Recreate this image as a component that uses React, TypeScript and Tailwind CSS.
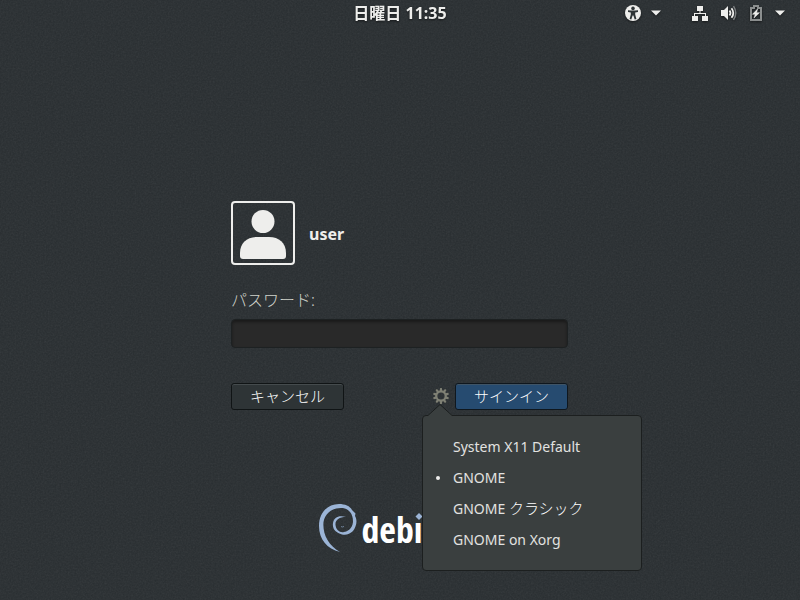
import React from "react";

const sessions = [
  { name: "System X11 Default", kana: "", active: false },
  { name: "GNOME", kana: "", active: true },
  { name: "GNOME ", kana: "クラシック", active: false },
  { name: "GNOME on Xorg", kana: "", active: false },
];

function Grain() {
  return (
    <svg aria-hidden="true" className="pointer-events-none absolute inset-0 h-full w-full opacity-[0.09]">
      <filter id="grain">
        <feTurbulence type="fractalNoise" baseFrequency="0.6" numOctaves="2" />
        <feColorMatrix type="saturate" values="0" />
      </filter>
      <rect width="100%" height="100%" filter="url(#grain)" />
    </svg>
  );
}

function Caret() {
  return (
    <svg width="10" height="6" viewBox="0 0 10 6" fill="#eeeeec" aria-hidden="true">
      <path d="M0 0.5h10L5 5.5z" />
    </svg>
  );
}

function AccessibilityIcon() {
  return (
    <svg width="16" height="16" viewBox="0 0 16 16" aria-hidden="true">
      <circle cx="8" cy="8" r="8" fill="#eeeeec" />
      <circle cx="8" cy="3.4" r="1.8" fill="#2e3436" />
      <path
        d="M3 5.2l3.2.4h3.6l3.2-.4v1.700l-2.800.5v2.200l1.200 4.400-1.700.5L8.400 10.600h-.8L6.300 14.500l-1.700-.5L5.800 9.600V7.400L3 6.900z"
        fill="#2e3436"
      />
    </svg>
  );
}

function NetworkIcon() {
  return (
    <svg width="16" height="16" viewBox="0 0 16 16" fill="#eeeeec" aria-hidden="true">
      <path d="M5 1h6v5H8.500v2H14v3h2v5h-6v-5h3V9H3v2h3v5H0v-5h2V8h5.500V6H5z" />
    </svg>
  );
}

function VolumeIcon() {
  return (
    <svg width="16" height="16" viewBox="0 0 16 16" fill="none" aria-hidden="true">
      <path d="M0 5h3l4-4v14l-4-4H0z" fill="#eeeeec" />
      <path d="M8.500 5.500q2 2.500 0 5M10.500 3.200q3.600 4.800 0 9.600" stroke="#eeeeec" strokeWidth="1.800" />
      <path d="M12.500 1.200q4.500 6.800 0 13.600" stroke="#7b7f80" strokeWidth="1.500" />
    </svg>
  );
}

function BatteryIcon() {
  return (
    <svg width="12" height="16" viewBox="0 0 12 16" aria-hidden="true">
      <path d="M4 1h4v2h3v12H1V3h3z" fill="none" stroke="#8b8e8e" strokeWidth="2" />
      <path d="M7.500 4L2.500 9.300h2.700L4 13l5.500-5.300H6.700z" fill="#eeeeec" stroke="#eeeeec" strokeWidth="0.500" />
    </svg>
  );
}

function GearIcon() {
  const teeth = [0, 36, 72, 108, 144, 180, 216, 252, 288, 324];
  return (
    <svg width="16" height="16" viewBox="0 0 16 16" aria-hidden="true">
      <circle cx="8" cy="8" r="4.700" fill="none" stroke="#7f8074" strokeWidth="2.200" />
      {teeth.map((angle) => (
        <path key={angle} d="M7.100 0h1.800l.4 3H6.700z" fill="#7f8074" transform={`rotate(${angle} 8 8)`} />
      ))}
    </svg>
  );
}

function TopBar() {
  return (
    <header className="relative grid h-[26px] grid-cols-[1fr_auto_1fr] items-center px-[15px] [filter:drop-shadow(0_1px_1px_#0008)]">
      <div />
      <time className="text-base font-bold">日曜日 11:35</time>
      <div className="flex items-center justify-end gap-[31px]">
        <button type="button" aria-label="アクセシビリティ" className="flex h-[26px] items-center gap-[10px]">
          <AccessibilityIcon />
          <Caret />
        </button>
        <button type="button" aria-label="システム" className="flex h-[26px] items-center gap-[13px]">
          <NetworkIcon />
          <VolumeIcon />
          <BatteryIcon />
          <Caret />
        </button>
      </div>
    </header>
  );
}

function SessionMenu() {
  return (
    <div
      role="menu"
      className="absolute top-8 -left-[11px] z-10 w-[220px] rounded-[4px] border border-[#1c1f1f] bg-[#3a3f3f] py-[15px] text-[#e2e2e0]"
    >
      <svg width="26" height="13" viewBox="0 0 26 13" className="absolute -top-3 left-1" aria-hidden="true">
        <path d="M0.500 13V11.500L13 0.500L25.500 11.500V13z" fill="#3a3f3f" />
        <path d="M0 11.500h1L13 0.500L25 11.500h1" fill="none" stroke="#1c1f1f" />
      </svg>
      {sessions.map((session) => (
        <button
          key={session.name + session.kana}
          type="button"
          role="menuitemradio"
          aria-checked={session.active}
          className="flex h-[31px] w-full items-center text-left text-sm"
        >
          <span className="flex w-[30px] justify-center">
            {session.active && <span className="h-1 w-1 rounded-full bg-[#eeeeec]" />}
          </span>
          <span>
            {session.name}
            {session.kana && <span className="text-[15px] leading-5 font-light text-white">{session.kana}</span>}
          </span>
        </button>
      ))}
    </div>
  );
}

function LoginForm() {
  return (
    <form className="relative z-10 flex w-[337px] flex-col" onSubmit={(event) => event.preventDefault()}>
      <div className="flex items-center gap-[14px]">
        <div className="h-16 w-16 rounded-[4px] border-2 border-[#eeeeec]">
          <svg width="60" height="60" viewBox="0 0 60 60" fill="#eeeeec" aria-hidden="true">
            <circle cx="30" cy="18.500" r="11.500" />
            <path d="M7 53V50C7 40 14 34 24 34H36C46 34 53 40 53 50V53Q53 56 50 56H10Q7 56 7 53z" />
          </svg>
        </div>
        <span className="pt-0.5 text-base font-bold">user</span>
      </div>
      <label htmlFor="password" className="mt-[23px] text-base leading-6 font-light text-[#d0d3cb]">
        パスワード:
      </label>
      <input
        id="password"
        type="password"
        className="mt-[7px] h-[29px] w-full rounded-[4px] border border-[#1d2122] bg-[#292929] px-2 shadow-[inset_0_2px_3px_#1a1a1a] outline-none"
      />
      <div className="mt-[35px] flex items-center">
        <button
          type="button"
          className="h-[27px] w-[113px] rounded-[3px] border border-[#101415] bg-[#2e3436] pb-0.5 text-[15px] leading-5 font-light text-white shadow-[inset_0_1px_0_#454b4d]"
        >
          キャンセル
        </button>
        <div className="relative mr-1.5 ml-auto">
          <button type="button" aria-label="セッション" className="flex h-[27px] w-4 items-center pb-0.5">
            <GearIcon />
          </button>
          <SessionMenu />
        </div>
        <button
          type="submit"
          className="h-[27px] w-[113px] rounded-[3px] border border-[#0f171e] bg-[#264b70] pb-0.5 text-[15px] leading-5 font-light text-white shadow-[inset_0_1px_0_#3f5466]"
        >
          サインイン
        </button>
      </div>
    </form>
  );
}

function DebianLogo() {
  return (
    <div className="relative flex h-[50px] w-[162px] items-center gap-[5px]" aria-label="debian">
      <svg width="38" height="50" viewBox="0 0 38 50" className="shrink-0" aria-hidden="true">
        <path
          d="M21 49C8 46 0 36 0 23C0 9 9 1 20 1C26 1 31 3 33 7L36.500 10.500L36 13C39 18 37 24 34 28C31 31 27 32.500 23 31.500C17 30 13 26 14 20C15 14 20 12 27 14C20 14 16 17 16.500 22C17 27 21 30 25 29C31 28 34 23 34 18C34 11 30 6 24 5C14 4 6 10 4.500 19C3.500 31 9 42 21 49z"
          fill="#9bb4d6"
        />
        <path d="M22 23.500q1 1 3 0" fill="none" stroke="#6f8299" />
      </svg>
      <span className="relative pt-1 font-['Noto_Sans_ExtraCondensed','Noto_Sans_Condensed','Open_Sans_Condensed','Roboto_Condensed','Lato',sans-serif] text-[36px] leading-[50px] font-semibold text-white">
        deb
        <span className="relative">
          i
          <svg width="11" height="14" viewBox="0 0 11 14" className="absolute top-1 left-0" aria-hidden="true">
            <path d="M0 2h11v12H0z" fill="#2e3436" />
            <path d="M5 4l3.500 3.500L5 11L1.500 7.500z" fill="#9bb4d6" />
          </svg>
        </span>
      </span>
    </div>
  );
}

export default function App() {
  return (
    <div className="relative flex min-h-screen flex-col bg-[#282d30] font-['Noto_Sans','Noto_Sans_CJK_JP',sans-serif] text-[#eeeeec]">
      <Grain />
      <TopBar />
      <main className="relative flex grow flex-col items-center pt-[175px] pr-px">
        <LoginForm />
        <footer className="mt-auto pb-[47px]">
          <DebianLogo />
        </footer>
      </main>
    </div>
  );
}
